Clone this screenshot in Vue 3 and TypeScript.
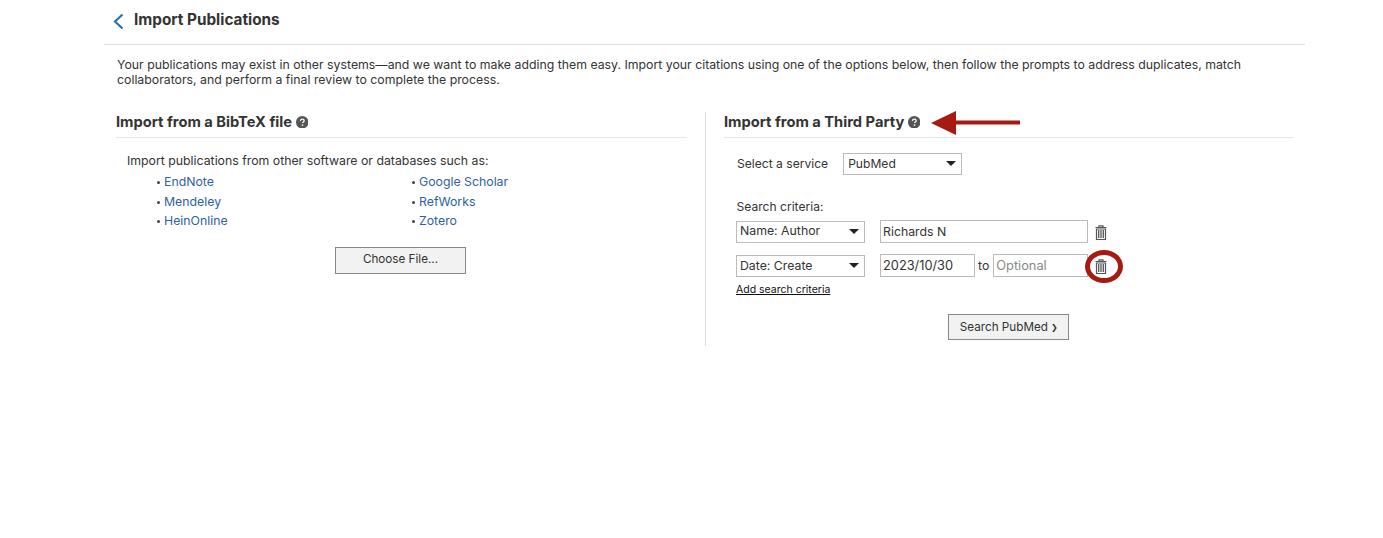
<script setup lang="ts">
const leftLinks = ['EndNote', 'Mendeley', 'HeinOnline']
const rightLinks = ['Google Scholar', 'RefWorks', 'Zotero']
</script>

<template>
  <div class="page">
    <header class="top">
      <svg class="back" width="12" height="17" viewBox="0 0 12 17"><path d="M10.5 1.5 L3 8.5 L10.5 15.5" fill="none" stroke="#2f6db5" stroke-width="2.2" /></svg>
      <h1>Import Publications</h1>
    </header>
    <p class="intro">Your publications may exist in other systems—and we want to make adding them easy. Import your citations using one of the options below, then follow the prompts to address duplicates, match collaborators, and perform a final review to complete the process.</p>
    <div class="cols">
      <section class="left">
        <h2>Import from a BibTeX file <svg class="help" width="13" height="13" viewBox="0 0 13 13"><circle cx="6.5" cy="6.5" r="6.5" fill="#555" /><path d="M4.6 5.1c.1-1.2 1-1.8 2-1.8s1.9.6 1.9 1.6c0 1.300-1.600 1.300-1.600 2.500" fill="none" stroke="#fff" stroke-width="1.300" /><rect x="6" y="8.700" width="1.500" height="1.500" fill="#fff" /></svg></h2>
        <p class="lead">Import publications from other software or databases such as:</p>
        <div class="links">
          <ul>
            <li v-for="l in leftLinks" :key="l"><a>{{ l }}</a></li>
          </ul>
          <ul>
            <li v-for="l in rightLinks" :key="l"><a>{{ l }}</a></li>
          </ul>
        </div>
        <div class="choose-row"><button class="btn choose">Choose File...</button></div>
      </section>
      <section class="right">
        <h2>
          Import from a Third Party <svg class="help" width="13" height="13" viewBox="0 0 13 13"><circle cx="6.5" cy="6.5" r="6.5" fill="#555" /><path d="M4.6 5.1c.1-1.2 1-1.8 2-1.8s1.9.6 1.9 1.6c0 1.300-1.600 1.300-1.600 2.500" fill="none" stroke="#fff" stroke-width="1.300" /><rect x="6" y="8.700" width="1.500" height="1.500" fill="#fff" /></svg>
          <svg class="arrow" width="90" height="26" viewBox="0 0 90 26"><path d="M0 13 L25 1 L25 10.500 L89 10.500 L89 14.500 L25 14.500 L25 25 Z" fill="#a61a12" /></svg>
        </h2>
        <div class="service">
          <label>Select a service</label>
          <div class="select svc">PubMed<i class="caret"></i></div>
        </div>
        <div class="crit-label">Search criteria:</div>
        <div class="row">
          <div class="select crit first">Name: Author<i class="caret"></i></div>
          <div class="input wide">Richards N</div>
          <svg class="trash" width="12" height="15" viewBox="0 0 12 15"><path d="M4 2V.8h4V2M.5 2.500h11M1.500 4h9v10.500h-9z" fill="none" stroke="#555" stroke-width="1.200" /><path d="M3.700 5v8M6 5v8M8.300 5v8" stroke="#555" stroke-width="1.300" /></svg>
        </div>
        <div class="row second">
          <div class="select crit">Date: Create<i class="caret"></i></div>
          <div class="input date">2023/10/30</div>
          <span class="to">to</span>
          <div class="input opt">Optional</div>
          <span class="trash-wrap">
            <svg class="trash" width="12" height="15" viewBox="0 0 12 15"><path d="M4 2V.8h4V2M.5 2.500h11M1.500 4h9v10.500h-9z" fill="none" stroke="#555" stroke-width="1.200" /><path d="M3.700 5v8M6 5v8M8.300 5v8" stroke="#555" stroke-width="1.300" /></svg>
            <i class="ring"></i>
          </span>
        </div>
        <a class="add">Add search criteria</a>
        <div class="search-row"><button class="btn search">Search PubMed <span class="chev">❯</span></button></div>
      </section>
    </div>
  </div>
</template>

<style>
html, body { background: #fff; }
</style>

<style scoped>
.page { width: 1201px; margin-left: 104px; font-family: Inter, "Liberation Sans", sans-serif; font-size: 12.3px; color: #333; }
.top { height: 44px; border-bottom: 1px solid #ddd; display: flex; align-items: center; padding-left: 8px; gap: 10px; box-sizing: content-box; }
.back { margin-top: -1px; }
h1 { margin: 0; font-size: 15.3px; font-weight: 700; color: #333; position: relative; top: -3px; }
.intro { margin: 12px 40px 0 13px; line-height: 15px; }
.cols { display: flex; margin-top: 25px; }
.left { width: 570.500px; margin-left: 12px; }
.right { width: 569px; margin-left: 18.500px; border-left: 1px solid #ddd; padding-left: 18px; height: 234px; box-sizing: content-box; }
.right h2 { position: relative; }
h2 { margin: 0; height: 25px; border-bottom: 1px solid #e6e6e6; font-size: 14.7px; font-weight: 700; color: #333; line-height: 20px; }
.help { width: 12.500px; height: 12.500px; vertical-align: -1px; margin-left: 0; }
.arrow { position: absolute; left: 207px; top: -2px; }
.lead { margin: 15px 0 0 11px; line-height: 16px; }
.links { display: flex; margin: 3px 0 0 40px; }
.links ul { list-style: none; margin: 0; padding: 0; width: 255px; }
.links li { height: 19.500px; line-height: 19.500px; padding-left: 8px; position: relative; }
.links li::before { content: ""; position: absolute; left: 1px; top: 9px; width: 3px; height: 3px; border-radius: 50%; background: #444; }
.links a { color: #2f5fa5; }
.choose-row { display: flex; margin: 16px 0 0 219px; }
.btn { font-family: inherit; font-size: 11.700px; color: #333; background: #f2f2f2; border: 1px solid #888; padding: 0; }
.choose { width: 131px; height: 27px; padding-bottom: 2px; }
.service { display: flex; align-items: flex-start; margin: 15px 0 0 13px; gap: 15px; line-height: 21px; font-size: 12.100px; }
.select { border: 1px solid #bbb; box-sizing: border-box; height: 22px; line-height: 19px; padding-left: 3px; position: relative; background: #fff; }
.svc { padding-left: 4px; }
.first { line-height: 18px; }
.svc { width: 119px; }
.crit { width: 129px; }
.caret { position: absolute; right: 5px; top: 7px; border-left: 5.500px solid transparent; border-right: 5.500px solid transparent; border-top: 5px solid #222; }
.crit-label { margin: 24px 0 0 12.500px; line-height: 16px; font-size: 12.100px; }
.row { display: flex; align-items: center; margin: 5px 0 0 12px; height: 23px; position: relative; }
.row.second { margin-top: 11px; }
.input { border: 1px solid #bbb; box-sizing: border-box; height: 23px; line-height: 21px; padding-left: 2px; margin-left: 15px; font-size: 12.800px; }
.wide { width: 208px; font-size: 12.300px; }
.date { width: 95px; }
.to { margin: 0 4px 0 3px; }
.opt { width: 95px; margin-left: 0; color: #888; }
.trash { margin-left: 7px; margin-top: 2px; }
.trash-wrap { position: relative; display: inline-flex; }
.ring { position: absolute; left: -3px; top: -7px; width: 38px; height: 33px; border: 5px solid #a61a12; border-radius: 50%; box-sizing: border-box; }
.add { display: block; margin: 6px 0 0 12px; font-size: 10.500px; color: #111; text-decoration: underline; line-height: 14px; }
.search-row { margin: 17px 0 0 224px; }
.search { width: 121px; height: 26px; padding-left: 1px; }
.chev { font-size: 8px; position: relative; top: -1px; }
</style>
